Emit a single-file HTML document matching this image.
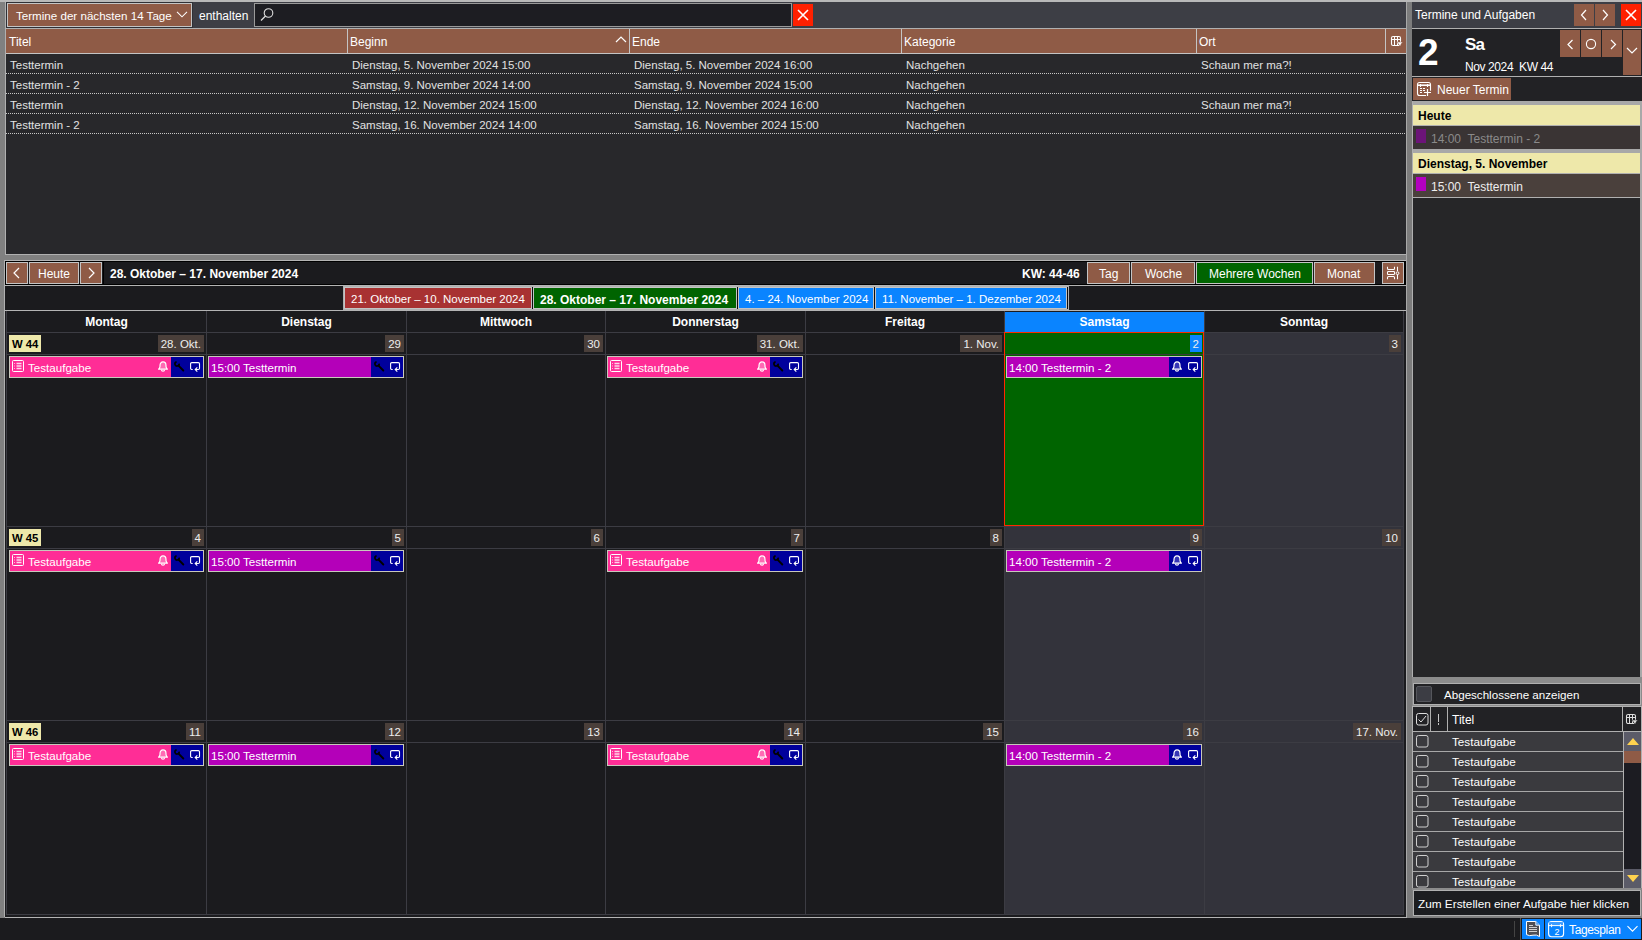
<!DOCTYPE html><html><head><meta charset="utf-8"><style>
html,body{margin:0;padding:0;width:1642px;height:940px;overflow:hidden;background:#808080;font-family:"Liberation Sans", sans-serif;font-size:12px;color:#fff;}
div{box-sizing:border-box;}
svg{position:absolute;overflow:visible}
</style></head><body>
<div style="position:absolute;left:0px;top:0px;width:1642px;height:2px;background:#b9b9b9"></div>
<div style="position:absolute;left:5px;top:2px;width:1px;height:253px;background:#b0b0b0"></div>
<div style="position:absolute;left:4px;top:260px;width:1px;height:657px;background:#b0b0b0"></div>
<div style="position:absolute;left:6px;top:2px;width:1400px;height:26px;background:#3d3e45"></div>
<div style="position:absolute;left:6px;top:2px;width:187px;height:26px;background:#2f3036"></div>
<div style="position:absolute;left:7px;top:3px;width:185px;height:24px;background:#8f5b46;border:1px solid #c4c4c4"></div>
<div style="position:absolute;left:16px;top:9px;white-space:nowrap;font-size:11.6px">Termine der nächsten 14 Tage</div>
<svg style="left:176px;top:11px" width="12" height="8"><path d="M1 0.8 L6 5.8 L11 0.8" stroke="#fff" stroke-width="1.05" fill="none"/></svg>
<div style="position:absolute;left:199px;top:9px;white-space:nowrap;">enthalten</div>
<div style="position:absolute;left:254px;top:3px;width:538px;height:24px;background:#1d1d22;border:1px solid #9a9a9a"></div>
<svg style="left:259px;top:7px" width="16" height="16"><circle cx="9.5" cy="6" r="4.3" stroke="#ddd" stroke-width="1.1" fill="none"/><path d="M6.5 9 L2 13.5" stroke="#ddd" stroke-width="1.3"/></svg>
<div style="position:absolute;left:793px;top:4px;width:20px;height:22px;background:#ff2000"></div>
<svg style="left:797px;top:9px" width="12" height="12"><path d="M1 1 L11 11 M11 1 L1 11" stroke="#fff" stroke-width="1.6"/></svg>
<div style="position:absolute;left:6px;top:28px;width:1400px;height:1px;background:#b0b0b0"></div>
<div style="position:absolute;left:6px;top:29px;width:1400px;height:24px;background:#8f5b46"></div>
<div style="position:absolute;left:6px;top:53px;width:1400px;height:1px;background:#c4c4c4"></div>
<div style="position:absolute;left:347px;top:29px;width:1px;height:24px;background:#c4c4c4"></div>
<div style="position:absolute;left:629px;top:29px;width:1px;height:24px;background:#c4c4c4"></div>
<div style="position:absolute;left:901px;top:29px;width:1px;height:24px;background:#c4c4c4"></div>
<div style="position:absolute;left:1196px;top:29px;width:1px;height:24px;background:#c4c4c4"></div>
<div style="position:absolute;left:1385px;top:29px;width:1px;height:24px;background:#c4c4c4"></div>
<div style="position:absolute;left:9px;top:35px;white-space:nowrap;">Titel</div>
<div style="position:absolute;left:350px;top:35px;white-space:nowrap;">Beginn</div>
<svg style="left:615px;top:36px" width="12" height="8"><path d="M1 6 L6 1 L11 6" stroke="#fff" stroke-width="1.2" fill="none"/></svg>
<div style="position:absolute;left:632px;top:35px;white-space:nowrap;">Ende</div>
<div style="position:absolute;left:904px;top:35px;white-space:nowrap;">Kategorie</div>
<div style="position:absolute;left:1199px;top:35px;white-space:nowrap;">Ort</div>
<svg style="left:1391px;top:36px" width="13" height="12"><rect x="0.5" y="0.5" width="9" height="9" rx="1.6" stroke="#fff" stroke-width="1.1" fill="none"/><path d="M0.5 3.5 H9.5 M3.5 0.5 V9.5 M6.5 0.5 V9.5" stroke="#fff" stroke-width="1.05"/><path d="M6 6 H11.6 L8.8 10 Z" fill="#fff" stroke="#8f5b46" stroke-width="0.5"/></svg>
<div style="position:absolute;left:6px;top:54px;width:1400px;height:200px;background:#28282b"></div>
<div style="position:absolute;left:5px;top:254px;width:1402px;height:1px;background:#b0b0b0"></div>
<div style="position:absolute;left:10px;top:59px;white-space:nowrap;color:#e2e2e2;font-size:11.5px">Testtermin</div>
<div style="position:absolute;left:352px;top:59px;white-space:nowrap;color:#e2e2e2;font-size:11.5px">Dienstag, 5. November 2024 15:00</div>
<div style="position:absolute;left:634px;top:59px;white-space:nowrap;color:#e2e2e2;font-size:11.5px">Dienstag, 5. November 2024 16:00</div>
<div style="position:absolute;left:906px;top:59px;white-space:nowrap;color:#e2e2e2;font-size:11.5px">Nachgehen</div>
<div style="position:absolute;left:1201px;top:59px;white-space:nowrap;color:#e2e2e2;font-size:11.5px">Schaun mer ma?!</div>
<div style="position:absolute;left:6px;top:73px;width:1400px;height:1px;background-image:linear-gradient(90deg,#c8c8c8 50%,transparent 50%);background-size:2px 1px"></div>
<div style="position:absolute;left:10px;top:79px;white-space:nowrap;color:#e2e2e2;font-size:11.5px">Testtermin - 2</div>
<div style="position:absolute;left:352px;top:79px;white-space:nowrap;color:#e2e2e2;font-size:11.5px">Samstag, 9. November 2024 14:00</div>
<div style="position:absolute;left:634px;top:79px;white-space:nowrap;color:#e2e2e2;font-size:11.5px">Samstag, 9. November 2024 15:00</div>
<div style="position:absolute;left:906px;top:79px;white-space:nowrap;color:#e2e2e2;font-size:11.5px">Nachgehen</div>
<div style="position:absolute;left:6px;top:93px;width:1400px;height:1px;background-image:linear-gradient(90deg,#c8c8c8 50%,transparent 50%);background-size:2px 1px"></div>
<div style="position:absolute;left:10px;top:99px;white-space:nowrap;color:#e2e2e2;font-size:11.5px">Testtermin</div>
<div style="position:absolute;left:352px;top:99px;white-space:nowrap;color:#e2e2e2;font-size:11.5px">Dienstag, 12. November 2024 15:00</div>
<div style="position:absolute;left:634px;top:99px;white-space:nowrap;color:#e2e2e2;font-size:11.5px">Dienstag, 12. November 2024 16:00</div>
<div style="position:absolute;left:906px;top:99px;white-space:nowrap;color:#e2e2e2;font-size:11.5px">Nachgehen</div>
<div style="position:absolute;left:1201px;top:99px;white-space:nowrap;color:#e2e2e2;font-size:11.5px">Schaun mer ma?!</div>
<div style="position:absolute;left:6px;top:113px;width:1400px;height:1px;background-image:linear-gradient(90deg,#c8c8c8 50%,transparent 50%);background-size:2px 1px"></div>
<div style="position:absolute;left:10px;top:119px;white-space:nowrap;color:#e2e2e2;font-size:11.5px">Testtermin - 2</div>
<div style="position:absolute;left:352px;top:119px;white-space:nowrap;color:#e2e2e2;font-size:11.5px">Samstag, 16. November 2024 14:00</div>
<div style="position:absolute;left:634px;top:119px;white-space:nowrap;color:#e2e2e2;font-size:11.5px">Samstag, 16. November 2024 15:00</div>
<div style="position:absolute;left:906px;top:119px;white-space:nowrap;color:#e2e2e2;font-size:11.5px">Nachgehen</div>
<div style="position:absolute;left:6px;top:133px;width:1400px;height:1px;background-image:linear-gradient(90deg,#c8c8c8 50%,transparent 50%);background-size:2px 1px"></div>
<div style="position:absolute;left:5px;top:255px;width:1402px;height:5px;background:#808080"></div>
<div style="position:absolute;left:5px;top:260px;width:1402px;height:1px;background:#b4b4b4"></div>
<div style="position:absolute;left:1406px;top:2px;width:1px;height:915px;background:#a8a8a8"></div>
<div style="position:absolute;left:5px;top:261px;width:1401px;height:24px;background:#000"></div>
<div style="position:absolute;left:6px;top:262px;width:97px;height:22px;background:#1b1b1e"></div>
<div style="position:absolute;left:6px;top:262px;width:22px;height:22px;background:#8f5b46;border:1px solid #c4c4c4"></div>
<div style="position:absolute;left:29px;top:262px;width:50px;height:22px;background:#8f5b46;border:1px solid #c4c4c4"></div>
<div style="position:absolute;left:80px;top:262px;width:22px;height:22px;background:#8f5b46;border:1px solid #c4c4c4"></div>
<svg style="left:12px;top:267px" width="10" height="12"><path d="M7 1 L2 6 L7 11" stroke="#fff" stroke-width="1.2" fill="none"/></svg>
<div style="position:absolute;left:38px;top:267px;white-space:nowrap;">Heute</div>
<svg style="left:87px;top:267px" width="10" height="12"><path d="M2 1 L7 6 L2 11" stroke="#fff" stroke-width="1.2" fill="none"/></svg>
<div style="position:absolute;left:104px;top:262px;width:1300px;height:22px;background:#1b1b1e"></div>
<div style="position:absolute;left:110px;top:267px;white-space:nowrap;font-weight:bold">28. Oktober – 17. November 2024</div>
<div style="position:absolute;left:1022px;top:267px;white-space:nowrap;font-weight:bold">KW: 44-46</div>
<div style="position:absolute;left:1087px;top:262px;width:43px;height:22px;background:#8f5b46;border:1px solid #c4c4c4"></div>
<div style="position:absolute;left:1099px;top:267px;white-space:nowrap;">Tag</div>
<div style="position:absolute;left:1131px;top:262px;width:64px;height:22px;background:#8f5b46;border:1px solid #c4c4c4"></div>
<div style="position:absolute;left:1145px;top:267px;white-space:nowrap;">Woche</div>
<div style="position:absolute;left:1196px;top:262px;width:117px;height:22px;background:#006400;border:1px solid #c4c4c4"></div>
<div style="position:absolute;left:1209px;top:267px;white-space:nowrap;">Mehrere Wochen</div>
<div style="position:absolute;left:1314px;top:262px;width:61px;height:22px;background:#8f5b46;border:1px solid #c4c4c4"></div>
<div style="position:absolute;left:1327px;top:267px;white-space:nowrap;">Monat</div>
<div style="position:absolute;left:1382px;top:262px;width:22px;height:22px;background:#8f5b46;border:1px solid #c4c4c4"></div>
<svg style="left:1386px;top:266px" width="14" height="14"><path d="M1.5 0.8 V2.5 Q1.5 3.5 2.5 3.5 H7.5 Q8.5 3.5 8.5 2.5 V0.8 M1.5 13.2 V11.5 Q1.5 10.5 2.5 10.5 H7.5 Q8.5 10.5 8.5 11.5 V13.2 M11.5 0.8 V5 M11.5 8.5 V13.2" stroke="#fff" stroke-width="1.05" fill="none"/><rect x="1.5" y="5.5" width="7" height="3" rx="0.8" stroke="#fff" stroke-width="1.05" fill="none"/><circle cx="11.5" cy="7.2" r="1.4" stroke="#fff" stroke-width="1" fill="none"/></svg>
<div style="position:absolute;left:5px;top:285px;width:1401px;height:1px;background:#b4b4b4"></div>
<div style="position:absolute;left:5px;top:286px;width:1401px;height:24px;background:#1b1b1e"></div>
<div style="position:absolute;left:343px;top:286px;width:726px;height:24px;background:#0d0d0f;border:1px solid #b0b0b0"></div>
<div style="position:absolute;left:344px;top:287px;width:188px;height:22px;background:#a83232;border:1px solid #c4c4c4"></div>
<div style="position:absolute;left:351px;top:293px;white-space:nowrap;font-size:11.5px">21. Oktober – 10. November 2024</div>
<div style="position:absolute;left:533px;top:287px;width:204px;height:22px;background:#006400;border:1px solid #c4c4c4"></div>
<div style="position:absolute;left:540px;top:293px;white-space:nowrap;font-size:12px;font-weight:bold">28. Oktober – 17. November 2024</div>
<div style="position:absolute;left:738px;top:287px;width:136px;height:22px;background:#0a84ff;border:1px solid #c4c4c4"></div>
<div style="position:absolute;left:745px;top:293px;white-space:nowrap;font-size:11.5px">4. – 24. November 2024</div>
<div style="position:absolute;left:875px;top:287px;width:192px;height:22px;background:#0a84ff;border:1px solid #c4c4c4"></div>
<div style="position:absolute;left:882px;top:293px;white-space:nowrap;font-size:11.5px">11. November – 1. Dezember 2024</div>
<div style="position:absolute;left:5px;top:310px;width:1401px;height:1px;background:#b4b4b4"></div>
<div style="position:absolute;left:5px;top:311px;width:1401px;height:606px;background:#1b1b1e"></div>
<div style="position:absolute;left:6px;top:311px;width:1px;height:604px;background:#3c3c43"></div>
<div style="position:absolute;left:7px;top:315px;width:199px;text-align:center;font-weight:bold;font-size:12px">Montag</div>
<div style="position:absolute;left:207px;top:315px;width:199px;text-align:center;font-weight:bold;font-size:12px">Dienstag</div>
<div style="position:absolute;left:407px;top:315px;width:198px;text-align:center;font-weight:bold;font-size:12px">Mittwoch</div>
<div style="position:absolute;left:606px;top:315px;width:199px;text-align:center;font-weight:bold;font-size:12px">Donnerstag</div>
<div style="position:absolute;left:806px;top:315px;width:198px;text-align:center;font-weight:bold;font-size:12px">Freitag</div>
<div style="position:absolute;left:1005px;top:312px;width:200px;height:20px;background:#0a84ff"></div>
<div style="position:absolute;left:1005px;top:315px;width:199px;text-align:center;font-weight:bold;font-size:12px">Samstag</div>
<div style="position:absolute;left:1205px;top:315px;width:198px;text-align:center;font-weight:bold;font-size:12px">Sonntag</div>
<div style="position:absolute;left:1004px;top:332px;width:200px;height:194px;background:#006400"></div>
<div style="position:absolute;left:1205px;top:333px;width:198px;height:193px;background:#33333b"></div>
<div style="position:absolute;left:7px;top:332px;width:1397px;height:1px;background:#3c3c43"></div>
<div style="position:absolute;left:7px;top:354px;width:1397px;height:1px;background:#3c3c43"></div>
<div style="position:absolute;right:1438px;top:335px;height:17px;padding:0 3px 0 3px;background:#4a3f3a;font-size:11.5px;line-height:18px;color:#eee">28. Okt.</div>
<div style="position:absolute;right:1238px;top:335px;height:17px;padding:0 3px 0 3px;background:#4a3f3a;font-size:11.5px;line-height:18px;color:#eee">29</div>
<div style="position:absolute;right:1039px;top:335px;height:17px;padding:0 3px 0 3px;background:#4a3f3a;font-size:11.5px;line-height:18px;color:#eee">30</div>
<div style="position:absolute;right:839px;top:335px;height:17px;padding:0 3px 0 3px;background:#4a3f3a;font-size:11.5px;line-height:18px;color:#eee">31. Okt.</div>
<div style="position:absolute;right:640px;top:335px;height:17px;padding:0 3px 0 3px;background:#4a3f3a;font-size:11.5px;line-height:18px;color:#eee">1. Nov.</div>
<div style="position:absolute;right:440px;top:335px;height:17px;padding:0 3px 0 3px;background:#0a84ff;font-size:11.5px;line-height:18px;color:#eee">2</div>
<div style="position:absolute;right:241px;top:335px;height:17px;padding:0 3px 0 3px;background:#4a3f3a;font-size:11.5px;line-height:18px;color:#eee">3</div>
<div style="position:absolute;left:9px;top:335px;width:32px;height:17px;background:#eee8aa;color:#000;font-weight:bold;font-size:11.3px;line-height:18px;padding-left:3px">W 44</div>
<div style="position:absolute;left:1005px;top:527px;width:199px;height:193px;background:#33333b"></div>
<div style="position:absolute;left:1205px;top:527px;width:198px;height:193px;background:#33333b"></div>
<div style="position:absolute;left:7px;top:526px;width:1397px;height:1px;background:#3c3c43"></div>
<div style="position:absolute;left:7px;top:548px;width:1397px;height:1px;background:#3c3c43"></div>
<div style="position:absolute;right:1438px;top:529px;height:17px;padding:0 3px 0 3px;background:#4a3f3a;font-size:11.5px;line-height:18px;color:#eee">4</div>
<div style="position:absolute;right:1238px;top:529px;height:17px;padding:0 3px 0 3px;background:#4a3f3a;font-size:11.5px;line-height:18px;color:#eee">5</div>
<div style="position:absolute;right:1039px;top:529px;height:17px;padding:0 3px 0 3px;background:#4a3f3a;font-size:11.5px;line-height:18px;color:#eee">6</div>
<div style="position:absolute;right:839px;top:529px;height:17px;padding:0 3px 0 3px;background:#4a3f3a;font-size:11.5px;line-height:18px;color:#eee">7</div>
<div style="position:absolute;right:640px;top:529px;height:17px;padding:0 3px 0 3px;background:#4a3f3a;font-size:11.5px;line-height:18px;color:#eee">8</div>
<div style="position:absolute;right:440px;top:529px;height:17px;padding:0 3px 0 3px;background:#4a3f3a;font-size:11.5px;line-height:18px;color:#eee">9</div>
<div style="position:absolute;right:241px;top:529px;height:17px;padding:0 3px 0 3px;background:#4a3f3a;font-size:11.5px;line-height:18px;color:#eee">10</div>
<div style="position:absolute;left:9px;top:529px;width:32px;height:17px;background:#eee8aa;color:#000;font-weight:bold;font-size:11.3px;line-height:18px;padding-left:3px">W 45</div>
<div style="position:absolute;left:1005px;top:721px;width:199px;height:193px;background:#33333b"></div>
<div style="position:absolute;left:1205px;top:721px;width:198px;height:193px;background:#33333b"></div>
<div style="position:absolute;left:7px;top:720px;width:1397px;height:1px;background:#3c3c43"></div>
<div style="position:absolute;left:7px;top:742px;width:1397px;height:1px;background:#3c3c43"></div>
<div style="position:absolute;right:1438px;top:723px;height:17px;padding:0 3px 0 3px;background:#4a3f3a;font-size:11.5px;line-height:18px;color:#eee">11</div>
<div style="position:absolute;right:1238px;top:723px;height:17px;padding:0 3px 0 3px;background:#4a3f3a;font-size:11.5px;line-height:18px;color:#eee">12</div>
<div style="position:absolute;right:1039px;top:723px;height:17px;padding:0 3px 0 3px;background:#4a3f3a;font-size:11.5px;line-height:18px;color:#eee">13</div>
<div style="position:absolute;right:839px;top:723px;height:17px;padding:0 3px 0 3px;background:#4a3f3a;font-size:11.5px;line-height:18px;color:#eee">14</div>
<div style="position:absolute;right:640px;top:723px;height:17px;padding:0 3px 0 3px;background:#4a3f3a;font-size:11.5px;line-height:18px;color:#eee">15</div>
<div style="position:absolute;right:440px;top:723px;height:17px;padding:0 3px 0 3px;background:#4a3f3a;font-size:11.5px;line-height:18px;color:#eee">16</div>
<div style="position:absolute;right:241px;top:723px;height:17px;padding:0 3px 0 3px;background:#4a3f3a;font-size:11.5px;line-height:18px;color:#eee">17. Nov.</div>
<div style="position:absolute;left:9px;top:723px;width:32px;height:17px;background:#eee8aa;color:#000;font-weight:bold;font-size:11.3px;line-height:18px;padding-left:3px">W 46</div>
<div style="position:absolute;left:206px;top:311px;width:1px;height:604px;background:#3c3c43"></div>
<div style="position:absolute;left:406px;top:311px;width:1px;height:604px;background:#3c3c43"></div>
<div style="position:absolute;left:605px;top:311px;width:1px;height:604px;background:#3c3c43"></div>
<div style="position:absolute;left:805px;top:311px;width:1px;height:604px;background:#3c3c43"></div>
<div style="position:absolute;left:1004px;top:311px;width:1px;height:604px;background:#3c3c43"></div>
<div style="position:absolute;left:1204px;top:311px;width:1px;height:604px;background:#3c3c43"></div>
<div style="position:absolute;left:1403px;top:311px;width:1px;height:604px;background:#3c3c43"></div>
<div style="position:absolute;left:7px;top:914px;width:1397px;height:1px;background:#3c3c43"></div>
<div style="position:absolute;left:1004px;top:332px;width:200px;height:194px;border:1px solid #ff2a00"></div>
<div style="position:absolute;left:1005px;top:354px;width:198px;height:1px;background:#3a3a3a"></div>
<div style="position:absolute;left:1404px;top:311px;width:2px;height:606px;background:#1b1b1e"></div>
<div style="position:absolute;left:5px;top:915px;width:1401px;height:2px;background:#1b1b1e"></div>
<div style="position:absolute;left:5px;top:917px;width:1402px;height:1px;background:#b4b4b4"></div>
<div style="position:absolute;left:9px;top:356px;width:195px;height:22px;background:#ff2d96;border:1px solid #c8c8bc"></div>
<div style="position:absolute;left:171px;top:357px;width:32px;height:20px;background:#00009c"></div>
<svg style="left:12px;top:360px" width="12" height="12"><rect x="0.5" y="0.5" width="11" height="11" rx="1" stroke="#fff" fill="none"/><path d="M2.5 3 V3.8 M2.5 5.6 V6.4 M2.5 8.2 V9" stroke="#fff" stroke-opacity="0.8"/><path d="M4.5 3.5 H9.5 M4.5 6 H9.5 M4.5 8.5 H9.5" stroke="#fff" stroke-width="1.3" stroke-opacity="0.8"/></svg>
<div style="position:absolute;left:28px;top:361px;white-space:nowrap;font-size:11.6px">Testaufgabe</div>
<svg style="left:158px;top:361px" width="12" height="12"><path d="M0.6 8.2 Q2 7 2 5.6 V4.4 A3 3.6 0 0 1 8 4.4 V5.6 Q8 7 9.4 8.2 Z" stroke="#fff" stroke-width="1.2" stroke-linejoin="round" fill="#ff6ab4"/><path d="M3.5 8.7 A1.5 1.5 0 0 0 6.5 8.7" stroke="#fff" stroke-width="1.2" fill="none"/></svg>
<svg style="left:174px;top:361px" width="12" height="12"><path d="M5.1 2.6 A2.1 2.1 0 1 1 2.6 0.9" stroke="#000" stroke-width="1.7" fill="none"/><path d="M4.5 4.6 L9.3 9.5" stroke="#000" stroke-width="1.9" stroke-linecap="round"/></svg>
<svg style="left:190px;top:362px" width="12" height="12"><path d="M2.7 7.5 H1.8 Q0.6 7.5 0.6 6.3 V1.8 Q0.6 0.6 1.8 0.6 H8.3 Q9.5 0.6 9.5 1.8 V6.3 Q9.5 7.5 8.3 7.5 H5.3" stroke="#fff" stroke-width="1.1" fill="none"/><path d="M7.3 5.4 L5.2 7.5 L7.3 9.6" stroke="#fff" stroke-width="1.1" fill="none"/></svg>
<div style="position:absolute;left:208px;top:356px;width:196px;height:22px;background:#b400b9;border:1px solid #c8c8bc"></div>
<div style="position:absolute;left:371px;top:357px;width:32px;height:20px;background:#00009c"></div>
<div style="position:absolute;left:211px;top:361px;white-space:nowrap;font-size:11.6px">15:00 Testtermin</div>
<svg style="left:374px;top:361px" width="12" height="12"><path d="M5.1 2.6 A2.1 2.1 0 1 1 2.6 0.9" stroke="#000" stroke-width="1.7" fill="none"/><path d="M4.5 4.6 L9.3 9.5" stroke="#000" stroke-width="1.9" stroke-linecap="round"/></svg>
<svg style="left:390px;top:362px" width="12" height="12"><path d="M2.7 7.5 H1.8 Q0.6 7.5 0.6 6.3 V1.8 Q0.6 0.6 1.8 0.6 H8.3 Q9.5 0.6 9.5 1.8 V6.3 Q9.5 7.5 8.3 7.5 H5.3" stroke="#fff" stroke-width="1.1" fill="none"/><path d="M7.3 5.4 L5.2 7.5 L7.3 9.6" stroke="#fff" stroke-width="1.1" fill="none"/></svg>
<div style="position:absolute;left:607px;top:356px;width:196px;height:22px;background:#ff2d96;border:1px solid #c8c8bc"></div>
<div style="position:absolute;left:770px;top:357px;width:32px;height:20px;background:#00009c"></div>
<svg style="left:610px;top:360px" width="12" height="12"><rect x="0.5" y="0.5" width="11" height="11" rx="1" stroke="#fff" fill="none"/><path d="M2.5 3 V3.8 M2.5 5.6 V6.4 M2.5 8.2 V9" stroke="#fff" stroke-opacity="0.8"/><path d="M4.5 3.5 H9.5 M4.5 6 H9.5 M4.5 8.5 H9.5" stroke="#fff" stroke-width="1.3" stroke-opacity="0.8"/></svg>
<div style="position:absolute;left:626px;top:361px;white-space:nowrap;font-size:11.6px">Testaufgabe</div>
<svg style="left:757px;top:361px" width="12" height="12"><path d="M0.6 8.2 Q2 7 2 5.6 V4.4 A3 3.6 0 0 1 8 4.4 V5.6 Q8 7 9.4 8.2 Z" stroke="#fff" stroke-width="1.2" stroke-linejoin="round" fill="#ff6ab4"/><path d="M3.5 8.7 A1.5 1.5 0 0 0 6.5 8.7" stroke="#fff" stroke-width="1.2" fill="none"/></svg>
<svg style="left:773px;top:361px" width="12" height="12"><path d="M5.1 2.6 A2.1 2.1 0 1 1 2.6 0.9" stroke="#000" stroke-width="1.7" fill="none"/><path d="M4.5 4.6 L9.3 9.5" stroke="#000" stroke-width="1.9" stroke-linecap="round"/></svg>
<svg style="left:789px;top:362px" width="12" height="12"><path d="M2.7 7.5 H1.8 Q0.6 7.5 0.6 6.3 V1.8 Q0.6 0.6 1.8 0.6 H8.3 Q9.5 0.6 9.5 1.8 V6.3 Q9.5 7.5 8.3 7.5 H5.3" stroke="#fff" stroke-width="1.1" fill="none"/><path d="M7.3 5.4 L5.2 7.5 L7.3 9.6" stroke="#fff" stroke-width="1.1" fill="none"/></svg>
<div style="position:absolute;left:1006px;top:356px;width:196px;height:22px;background:#b400b9;border:1px solid #c8c8bc"></div>
<div style="position:absolute;left:1169px;top:357px;width:32px;height:20px;background:#00009c"></div>
<div style="position:absolute;left:1009px;top:361px;white-space:nowrap;font-size:11.6px">14:00 Testtermin - 2</div>
<svg style="left:1172px;top:361px" width="12" height="12"><path d="M0.6 8.2 Q2 7 2 5.6 V4.4 A3 3.6 0 0 1 8 4.4 V5.6 Q8 7 9.4 8.2 Z" stroke="#fff" stroke-width="1.2" stroke-linejoin="round" fill="#3535b5"/><path d="M3.5 8.7 A1.5 1.5 0 0 0 6.5 8.7" stroke="#fff" stroke-width="1.2" fill="none"/></svg>
<svg style="left:1188px;top:362px" width="12" height="12"><path d="M2.7 7.5 H1.8 Q0.6 7.5 0.6 6.3 V1.8 Q0.6 0.6 1.8 0.6 H8.3 Q9.5 0.6 9.5 1.8 V6.3 Q9.5 7.5 8.3 7.5 H5.3" stroke="#fff" stroke-width="1.1" fill="none"/><path d="M7.3 5.4 L5.2 7.5 L7.3 9.6" stroke="#fff" stroke-width="1.1" fill="none"/></svg>
<div style="position:absolute;left:9px;top:550px;width:195px;height:22px;background:#ff2d96;border:1px solid #c8c8bc"></div>
<div style="position:absolute;left:171px;top:551px;width:32px;height:20px;background:#00009c"></div>
<svg style="left:12px;top:554px" width="12" height="12"><rect x="0.5" y="0.5" width="11" height="11" rx="1" stroke="#fff" fill="none"/><path d="M2.5 3 V3.8 M2.5 5.6 V6.4 M2.5 8.2 V9" stroke="#fff" stroke-opacity="0.8"/><path d="M4.5 3.5 H9.5 M4.5 6 H9.5 M4.5 8.5 H9.5" stroke="#fff" stroke-width="1.3" stroke-opacity="0.8"/></svg>
<div style="position:absolute;left:28px;top:555px;white-space:nowrap;font-size:11.6px">Testaufgabe</div>
<svg style="left:158px;top:555px" width="12" height="12"><path d="M0.6 8.2 Q2 7 2 5.6 V4.4 A3 3.6 0 0 1 8 4.4 V5.6 Q8 7 9.4 8.2 Z" stroke="#fff" stroke-width="1.2" stroke-linejoin="round" fill="#ff6ab4"/><path d="M3.5 8.7 A1.5 1.5 0 0 0 6.5 8.7" stroke="#fff" stroke-width="1.2" fill="none"/></svg>
<svg style="left:174px;top:555px" width="12" height="12"><path d="M5.1 2.6 A2.1 2.1 0 1 1 2.6 0.9" stroke="#000" stroke-width="1.7" fill="none"/><path d="M4.5 4.6 L9.3 9.5" stroke="#000" stroke-width="1.9" stroke-linecap="round"/></svg>
<svg style="left:190px;top:556px" width="12" height="12"><path d="M2.7 7.5 H1.8 Q0.6 7.5 0.6 6.3 V1.8 Q0.6 0.6 1.8 0.6 H8.3 Q9.5 0.6 9.5 1.8 V6.3 Q9.5 7.5 8.3 7.5 H5.3" stroke="#fff" stroke-width="1.1" fill="none"/><path d="M7.3 5.4 L5.2 7.5 L7.3 9.6" stroke="#fff" stroke-width="1.1" fill="none"/></svg>
<div style="position:absolute;left:208px;top:550px;width:196px;height:22px;background:#b400b9;border:1px solid #c8c8bc"></div>
<div style="position:absolute;left:371px;top:551px;width:32px;height:20px;background:#00009c"></div>
<div style="position:absolute;left:211px;top:555px;white-space:nowrap;font-size:11.6px">15:00 Testtermin</div>
<svg style="left:374px;top:555px" width="12" height="12"><path d="M5.1 2.6 A2.1 2.1 0 1 1 2.6 0.9" stroke="#000" stroke-width="1.7" fill="none"/><path d="M4.5 4.6 L9.3 9.5" stroke="#000" stroke-width="1.9" stroke-linecap="round"/></svg>
<svg style="left:390px;top:556px" width="12" height="12"><path d="M2.7 7.5 H1.8 Q0.6 7.5 0.6 6.3 V1.8 Q0.6 0.6 1.8 0.6 H8.3 Q9.5 0.6 9.5 1.8 V6.3 Q9.5 7.5 8.3 7.5 H5.3" stroke="#fff" stroke-width="1.1" fill="none"/><path d="M7.3 5.4 L5.2 7.5 L7.3 9.6" stroke="#fff" stroke-width="1.1" fill="none"/></svg>
<div style="position:absolute;left:607px;top:550px;width:196px;height:22px;background:#ff2d96;border:1px solid #c8c8bc"></div>
<div style="position:absolute;left:770px;top:551px;width:32px;height:20px;background:#00009c"></div>
<svg style="left:610px;top:554px" width="12" height="12"><rect x="0.5" y="0.5" width="11" height="11" rx="1" stroke="#fff" fill="none"/><path d="M2.5 3 V3.8 M2.5 5.6 V6.4 M2.5 8.2 V9" stroke="#fff" stroke-opacity="0.8"/><path d="M4.5 3.5 H9.5 M4.5 6 H9.5 M4.5 8.5 H9.5" stroke="#fff" stroke-width="1.3" stroke-opacity="0.8"/></svg>
<div style="position:absolute;left:626px;top:555px;white-space:nowrap;font-size:11.6px">Testaufgabe</div>
<svg style="left:757px;top:555px" width="12" height="12"><path d="M0.6 8.2 Q2 7 2 5.6 V4.4 A3 3.6 0 0 1 8 4.4 V5.6 Q8 7 9.4 8.2 Z" stroke="#fff" stroke-width="1.2" stroke-linejoin="round" fill="#ff6ab4"/><path d="M3.5 8.7 A1.5 1.5 0 0 0 6.5 8.7" stroke="#fff" stroke-width="1.2" fill="none"/></svg>
<svg style="left:773px;top:555px" width="12" height="12"><path d="M5.1 2.6 A2.1 2.1 0 1 1 2.6 0.9" stroke="#000" stroke-width="1.7" fill="none"/><path d="M4.5 4.6 L9.3 9.5" stroke="#000" stroke-width="1.9" stroke-linecap="round"/></svg>
<svg style="left:789px;top:556px" width="12" height="12"><path d="M2.7 7.5 H1.8 Q0.6 7.5 0.6 6.3 V1.8 Q0.6 0.6 1.8 0.6 H8.3 Q9.5 0.6 9.5 1.8 V6.3 Q9.5 7.5 8.3 7.5 H5.3" stroke="#fff" stroke-width="1.1" fill="none"/><path d="M7.3 5.4 L5.2 7.5 L7.3 9.6" stroke="#fff" stroke-width="1.1" fill="none"/></svg>
<div style="position:absolute;left:1006px;top:550px;width:196px;height:22px;background:#b400b9;border:1px solid #c8c8bc"></div>
<div style="position:absolute;left:1169px;top:551px;width:32px;height:20px;background:#00009c"></div>
<div style="position:absolute;left:1009px;top:555px;white-space:nowrap;font-size:11.6px">14:00 Testtermin - 2</div>
<svg style="left:1172px;top:555px" width="12" height="12"><path d="M0.6 8.2 Q2 7 2 5.6 V4.4 A3 3.6 0 0 1 8 4.4 V5.6 Q8 7 9.4 8.2 Z" stroke="#fff" stroke-width="1.2" stroke-linejoin="round" fill="#3535b5"/><path d="M3.5 8.7 A1.5 1.5 0 0 0 6.5 8.7" stroke="#fff" stroke-width="1.2" fill="none"/></svg>
<svg style="left:1188px;top:556px" width="12" height="12"><path d="M2.7 7.5 H1.8 Q0.6 7.5 0.6 6.3 V1.8 Q0.6 0.6 1.8 0.6 H8.3 Q9.5 0.6 9.5 1.8 V6.3 Q9.5 7.5 8.3 7.5 H5.3" stroke="#fff" stroke-width="1.1" fill="none"/><path d="M7.3 5.4 L5.2 7.5 L7.3 9.6" stroke="#fff" stroke-width="1.1" fill="none"/></svg>
<div style="position:absolute;left:9px;top:744px;width:195px;height:22px;background:#ff2d96;border:1px solid #c8c8bc"></div>
<div style="position:absolute;left:171px;top:745px;width:32px;height:20px;background:#00009c"></div>
<svg style="left:12px;top:748px" width="12" height="12"><rect x="0.5" y="0.5" width="11" height="11" rx="1" stroke="#fff" fill="none"/><path d="M2.5 3 V3.8 M2.5 5.6 V6.4 M2.5 8.2 V9" stroke="#fff" stroke-opacity="0.8"/><path d="M4.5 3.5 H9.5 M4.5 6 H9.5 M4.5 8.5 H9.5" stroke="#fff" stroke-width="1.3" stroke-opacity="0.8"/></svg>
<div style="position:absolute;left:28px;top:749px;white-space:nowrap;font-size:11.6px">Testaufgabe</div>
<svg style="left:158px;top:749px" width="12" height="12"><path d="M0.6 8.2 Q2 7 2 5.6 V4.4 A3 3.6 0 0 1 8 4.4 V5.6 Q8 7 9.4 8.2 Z" stroke="#fff" stroke-width="1.2" stroke-linejoin="round" fill="#ff6ab4"/><path d="M3.5 8.7 A1.5 1.5 0 0 0 6.5 8.7" stroke="#fff" stroke-width="1.2" fill="none"/></svg>
<svg style="left:174px;top:749px" width="12" height="12"><path d="M5.1 2.6 A2.1 2.1 0 1 1 2.6 0.9" stroke="#000" stroke-width="1.7" fill="none"/><path d="M4.5 4.6 L9.3 9.5" stroke="#000" stroke-width="1.9" stroke-linecap="round"/></svg>
<svg style="left:190px;top:750px" width="12" height="12"><path d="M2.7 7.5 H1.8 Q0.6 7.5 0.6 6.3 V1.8 Q0.6 0.6 1.8 0.6 H8.3 Q9.5 0.6 9.5 1.8 V6.3 Q9.5 7.5 8.3 7.5 H5.3" stroke="#fff" stroke-width="1.1" fill="none"/><path d="M7.3 5.4 L5.2 7.5 L7.3 9.6" stroke="#fff" stroke-width="1.1" fill="none"/></svg>
<div style="position:absolute;left:208px;top:744px;width:196px;height:22px;background:#b400b9;border:1px solid #c8c8bc"></div>
<div style="position:absolute;left:371px;top:745px;width:32px;height:20px;background:#00009c"></div>
<div style="position:absolute;left:211px;top:749px;white-space:nowrap;font-size:11.6px">15:00 Testtermin</div>
<svg style="left:374px;top:749px" width="12" height="12"><path d="M5.1 2.6 A2.1 2.1 0 1 1 2.6 0.9" stroke="#000" stroke-width="1.7" fill="none"/><path d="M4.5 4.6 L9.3 9.5" stroke="#000" stroke-width="1.9" stroke-linecap="round"/></svg>
<svg style="left:390px;top:750px" width="12" height="12"><path d="M2.7 7.5 H1.8 Q0.6 7.5 0.6 6.3 V1.8 Q0.6 0.6 1.8 0.6 H8.3 Q9.5 0.6 9.5 1.8 V6.3 Q9.5 7.5 8.3 7.5 H5.3" stroke="#fff" stroke-width="1.1" fill="none"/><path d="M7.3 5.4 L5.2 7.5 L7.3 9.6" stroke="#fff" stroke-width="1.1" fill="none"/></svg>
<div style="position:absolute;left:607px;top:744px;width:196px;height:22px;background:#ff2d96;border:1px solid #c8c8bc"></div>
<div style="position:absolute;left:770px;top:745px;width:32px;height:20px;background:#00009c"></div>
<svg style="left:610px;top:748px" width="12" height="12"><rect x="0.5" y="0.5" width="11" height="11" rx="1" stroke="#fff" fill="none"/><path d="M2.5 3 V3.8 M2.5 5.6 V6.4 M2.5 8.2 V9" stroke="#fff" stroke-opacity="0.8"/><path d="M4.5 3.5 H9.5 M4.5 6 H9.5 M4.5 8.5 H9.5" stroke="#fff" stroke-width="1.3" stroke-opacity="0.8"/></svg>
<div style="position:absolute;left:626px;top:749px;white-space:nowrap;font-size:11.6px">Testaufgabe</div>
<svg style="left:757px;top:749px" width="12" height="12"><path d="M0.6 8.2 Q2 7 2 5.6 V4.4 A3 3.6 0 0 1 8 4.4 V5.6 Q8 7 9.4 8.2 Z" stroke="#fff" stroke-width="1.2" stroke-linejoin="round" fill="#ff6ab4"/><path d="M3.5 8.7 A1.5 1.5 0 0 0 6.5 8.7" stroke="#fff" stroke-width="1.2" fill="none"/></svg>
<svg style="left:773px;top:749px" width="12" height="12"><path d="M5.1 2.6 A2.1 2.1 0 1 1 2.6 0.9" stroke="#000" stroke-width="1.7" fill="none"/><path d="M4.5 4.6 L9.3 9.5" stroke="#000" stroke-width="1.9" stroke-linecap="round"/></svg>
<svg style="left:789px;top:750px" width="12" height="12"><path d="M2.7 7.5 H1.8 Q0.6 7.5 0.6 6.3 V1.8 Q0.6 0.6 1.8 0.6 H8.3 Q9.5 0.6 9.5 1.8 V6.3 Q9.5 7.5 8.3 7.5 H5.3" stroke="#fff" stroke-width="1.1" fill="none"/><path d="M7.3 5.4 L5.2 7.5 L7.3 9.6" stroke="#fff" stroke-width="1.1" fill="none"/></svg>
<div style="position:absolute;left:1006px;top:744px;width:196px;height:22px;background:#b400b9;border:1px solid #c8c8bc"></div>
<div style="position:absolute;left:1169px;top:745px;width:32px;height:20px;background:#00009c"></div>
<div style="position:absolute;left:1009px;top:749px;white-space:nowrap;font-size:11.6px">14:00 Testtermin - 2</div>
<svg style="left:1172px;top:749px" width="12" height="12"><path d="M0.6 8.2 Q2 7 2 5.6 V4.4 A3 3.6 0 0 1 8 4.4 V5.6 Q8 7 9.4 8.2 Z" stroke="#fff" stroke-width="1.2" stroke-linejoin="round" fill="#3535b5"/><path d="M3.5 8.7 A1.5 1.5 0 0 0 6.5 8.7" stroke="#fff" stroke-width="1.2" fill="none"/></svg>
<svg style="left:1188px;top:750px" width="12" height="12"><path d="M2.7 7.5 H1.8 Q0.6 7.5 0.6 6.3 V1.8 Q0.6 0.6 1.8 0.6 H8.3 Q9.5 0.6 9.5 1.8 V6.3 Q9.5 7.5 8.3 7.5 H5.3" stroke="#fff" stroke-width="1.1" fill="none"/><path d="M7.3 5.4 L5.2 7.5 L7.3 9.6" stroke="#fff" stroke-width="1.1" fill="none"/></svg>
<div style="position:absolute;left:1407px;top:2px;width:5px;height:915px;background:#7c7c7c"></div>
<div style="position:absolute;left:1412px;top:2px;width:230px;height:26px;background:#3d3e45"></div>
<div style="position:absolute;left:1415px;top:8px;white-space:nowrap;">Termine und Aufgaben</div>
<div style="position:absolute;left:1574px;top:4px;width:20px;height:22px;background:#8f5b46"></div>
<div style="position:absolute;left:1595px;top:4px;width:20px;height:22px;background:#8f5b46"></div>
<svg style="left:1579px;top:9px" width="10" height="12"><path d="M7 1 L2.5 6 L7 11" stroke="#fff" stroke-width="1.2" fill="none"/></svg>
<svg style="left:1600px;top:9px" width="10" height="12"><path d="M3 1 L7.5 6 L3 11" stroke="#fff" stroke-width="1.2" fill="none"/></svg>
<div style="position:absolute;left:1621px;top:4px;width:20px;height:22px;background:#ff2000"></div>
<svg style="left:1625px;top:9px" width="12" height="12"><path d="M1 1 L11 11 M11 1 L1 11" stroke="#fff" stroke-width="1.6"/></svg>
<div style="position:absolute;left:1412px;top:28px;width:230px;height:1px;background:#b0b0b0"></div>
<div style="position:absolute;left:1412px;top:29px;width:230px;height:47px;background:#222225"></div>
<div style="position:absolute;left:1418px;top:31px;white-space:nowrap;font-size:37px;font-weight:bold;line-height:44px">2</div>
<div style="position:absolute;left:1465px;top:35px;white-space:nowrap;font-size:17px;font-weight:bold;letter-spacing:-0.8px">Sa</div>
<div style="position:absolute;left:1465px;top:60px;white-space:nowrap;font-size:12px;letter-spacing:-0.4px">Nov 2024&nbsp; KW 44</div>
<div style="position:absolute;left:1560px;top:30px;width:20px;height:27px;background:#8f5b46"></div>
<div style="position:absolute;left:1581px;top:30px;width:20px;height:27px;background:#8f5b46"></div>
<div style="position:absolute;left:1602px;top:30px;width:20px;height:27px;background:#8f5b46"></div>
<svg style="left:1566px;top:39px" width="10" height="12"><path d="M6.5 1 L2 5.5 L6.5 10" stroke="#fff" stroke-width="1.2" fill="none"/></svg>
<svg style="left:1585px;top:38px" width="12" height="12"><circle cx="6" cy="6" r="4.6" stroke="#fff" stroke-width="1.1" fill="none"/></svg>
<svg style="left:1608px;top:39px" width="10" height="12"><path d="M3 1 L7.5 5.5 L3 10" stroke="#fff" stroke-width="1.2" fill="none"/></svg>
<div style="position:absolute;left:1623px;top:30px;width:18px;height:45px;background:#8f5b46"></div>
<svg style="left:1626px;top:46px" width="12" height="10"><path d="M1 2 L6 7 L11 2" stroke="#fff" stroke-width="1.2" fill="none"/></svg>
<div style="position:absolute;left:1412px;top:76px;width:230px;height:1px;background:#b0b0b0"></div>
<div style="position:absolute;left:1412px;top:77px;width:230px;height:24px;background:#222225"></div>
<div style="position:absolute;left:1413px;top:78px;width:98px;height:22px;background:#8f5b46"></div>
<svg style="left:1417px;top:81px" width="16" height="16"><path d="M9 14.5 H2.5 Q0.5 14.5 0.5 12.5 V3.5 Q0.5 1.5 2.5 1.5 H11.5 Q13.5 1.5 13.5 3.5 V9.7 M3.5 3 V6 M10.5 3 V6 M3 7.5 H5 M6 7.5 H8 M3 9.5 H5 M6 9.5 H8 M3 11.5 H5" stroke="#fff" stroke-width="1.1" fill="none"/><path d="M0.5 4.2 H13.5" stroke="#fff" stroke-width="1.6"/><path d="M10.5 8 V15 M7 11.5 H14" stroke="#fff" stroke-width="1.2"/></svg>
<div style="position:absolute;left:1437px;top:83px;white-space:nowrap;">Neuer Termin</div>
<div style="position:absolute;left:1412px;top:101px;width:230px;height:4px;background:#a8a8a8"></div>
<div style="position:absolute;left:1412px;top:105px;width:230px;height:572px;background:#262628"></div>
<div style="position:absolute;left:1412px;top:101px;width:1px;height:576px;background:#b0b0b0"></div>
<div style="position:absolute;left:1640px;top:101px;width:2px;height:576px;background:#a8a8a8"></div>
<div style="position:absolute;left:1413px;top:105px;width:227px;height:20px;background:#eee8aa"></div>
<div style="position:absolute;left:1418px;top:109px;white-space:nowrap;color:#000;font-weight:bold">Heute</div>
<div style="position:absolute;left:1413px;top:125px;width:227px;height:1px;background:#b0b0b0"></div>
<div style="position:absolute;left:1413px;top:126px;width:227px;height:23px;background:#3a3434"></div>
<div style="position:absolute;left:1416px;top:129px;width:10px;height:14px;background:#6c1478"></div>
<div style="position:absolute;left:1431px;top:132px;white-space:nowrap;color:#8a8a8a">14:00&nbsp; Testtermin - 2</div>
<div style="position:absolute;left:1413px;top:149px;width:227px;height:4px;background:#a8a8a8"></div>
<div style="position:absolute;left:1413px;top:153px;width:227px;height:20px;background:#eee8aa"></div>
<div style="position:absolute;left:1418px;top:157px;white-space:nowrap;color:#000;font-weight:bold">Dienstag, 5. November</div>
<div style="position:absolute;left:1413px;top:173px;width:227px;height:1px;background:#b0b0b0"></div>
<div style="position:absolute;left:1413px;top:174px;width:227px;height:23px;background:#4a403c"></div>
<div style="position:absolute;left:1416px;top:177px;width:10px;height:14px;background:#b400c0"></div>
<div style="position:absolute;left:1431px;top:180px;white-space:nowrap;color:#eee">15:00&nbsp; Testtermin</div>
<div style="position:absolute;left:1413px;top:197px;width:227px;height:1px;background:#b0b0b0"></div>
<div style="position:absolute;left:1412px;top:677px;width:230px;height:6px;background:#8c8c8c"></div>
<div style="position:absolute;left:1412px;top:683px;width:230px;height:23px;background:#8c8c8c"></div>
<div style="position:absolute;left:1413px;top:683px;width:228px;height:22px;background:#222225;border:1px solid #b0b0b0"></div>
<div style="position:absolute;left:1416px;top:686px;width:16px;height:16px;background:#3c3d44;border:1px solid #55565c;border-radius:2px"></div>
<div style="position:absolute;left:1444px;top:688px;white-space:nowrap;font-size:11.6px">Abgeschlossene anzeigen</div>
<div style="position:absolute;left:1412px;top:706px;width:230px;height:182px;background:#262629;border:1px solid #b0b0b0"></div>
<div style="position:absolute;left:1413px;top:707px;width:228px;height:24px;background:#222225"></div>
<div style="position:absolute;left:1430px;top:707px;width:1px;height:24px;background:#b0b0b0"></div>
<div style="position:absolute;left:1447px;top:707px;width:1px;height:24px;background:#b0b0b0"></div>
<div style="position:absolute;left:1622px;top:707px;width:1px;height:24px;background:#b0b0b0"></div>
<div style="position:absolute;left:1413px;top:731px;width:228px;height:1px;background:#b0b0b0"></div>
<svg style="left:1416px;top:713px" width="13" height="13"><rect x="0.5" y="0.5" width="11.5" height="11.5" rx="2" stroke="#ddd" fill="none"/><path d="M2.5 6.5 L5 9 L10 3" stroke="#ddd" fill="none"/></svg>
<div style="position:absolute;left:1438px;top:714px;width:1px;height:8px;background:#c8c8c8"></div>
<div style="position:absolute;left:1438px;top:723px;width:1px;height:2px;background:#c8c8c8"></div>
<div style="position:absolute;left:1452px;top:713px;white-space:nowrap;">Titel</div>
<svg style="left:1626px;top:714px" width="13" height="12"><rect x="0.5" y="0.5" width="9" height="9" rx="1.6" stroke="#ddd" stroke-width="1.05" fill="none"/><path d="M0.5 3.5 H9.5 M3.5 0.5 V9.5 M6.5 0.5 V9.5" stroke="#ddd" stroke-width="1"/><path d="M6 6 H11.6 L8.8 10 Z" fill="#ddd" stroke="#222225" stroke-width="0.5"/></svg>
<div style="position:absolute;left:1413px;top:732px;width:210px;height:19px;background:#3a3a3e"></div>
<div style="position:absolute;left:1413px;top:751px;width:210px;height:1px;background:#a8a8a8"></div>
<svg style="left:1416px;top:735px" width="13" height="13"><rect x="0.5" y="0.5" width="11.5" height="11.5" rx="2" stroke="#cfcfcf" fill="none"/></svg>
<div style="position:absolute;left:1452px;top:735px;white-space:nowrap;font-size:11.7px">Testaufgabe</div>
<div style="position:absolute;left:1413px;top:752px;width:210px;height:19px;background:#3a3a3e"></div>
<div style="position:absolute;left:1413px;top:771px;width:210px;height:1px;background:#a8a8a8"></div>
<svg style="left:1416px;top:755px" width="13" height="13"><rect x="0.5" y="0.5" width="11.5" height="11.5" rx="2" stroke="#cfcfcf" fill="none"/></svg>
<div style="position:absolute;left:1452px;top:755px;white-space:nowrap;font-size:11.7px">Testaufgabe</div>
<div style="position:absolute;left:1413px;top:772px;width:210px;height:19px;background:#3a3a3e"></div>
<div style="position:absolute;left:1413px;top:791px;width:210px;height:1px;background:#a8a8a8"></div>
<svg style="left:1416px;top:775px" width="13" height="13"><rect x="0.5" y="0.5" width="11.5" height="11.5" rx="2" stroke="#cfcfcf" fill="none"/></svg>
<div style="position:absolute;left:1452px;top:775px;white-space:nowrap;font-size:11.7px">Testaufgabe</div>
<div style="position:absolute;left:1413px;top:792px;width:210px;height:19px;background:#3a3a3e"></div>
<div style="position:absolute;left:1413px;top:811px;width:210px;height:1px;background:#a8a8a8"></div>
<svg style="left:1416px;top:795px" width="13" height="13"><rect x="0.5" y="0.5" width="11.5" height="11.5" rx="2" stroke="#cfcfcf" fill="none"/></svg>
<div style="position:absolute;left:1452px;top:795px;white-space:nowrap;font-size:11.7px">Testaufgabe</div>
<div style="position:absolute;left:1413px;top:812px;width:210px;height:19px;background:#3a3a3e"></div>
<div style="position:absolute;left:1413px;top:831px;width:210px;height:1px;background:#a8a8a8"></div>
<svg style="left:1416px;top:815px" width="13" height="13"><rect x="0.5" y="0.5" width="11.5" height="11.5" rx="2" stroke="#cfcfcf" fill="none"/></svg>
<div style="position:absolute;left:1452px;top:815px;white-space:nowrap;font-size:11.7px">Testaufgabe</div>
<div style="position:absolute;left:1413px;top:832px;width:210px;height:19px;background:#3a3a3e"></div>
<div style="position:absolute;left:1413px;top:851px;width:210px;height:1px;background:#a8a8a8"></div>
<svg style="left:1416px;top:835px" width="13" height="13"><rect x="0.5" y="0.5" width="11.5" height="11.5" rx="2" stroke="#cfcfcf" fill="none"/></svg>
<div style="position:absolute;left:1452px;top:835px;white-space:nowrap;font-size:11.7px">Testaufgabe</div>
<div style="position:absolute;left:1413px;top:852px;width:210px;height:19px;background:#3a3a3e"></div>
<div style="position:absolute;left:1413px;top:871px;width:210px;height:1px;background:#a8a8a8"></div>
<svg style="left:1416px;top:855px" width="13" height="13"><rect x="0.5" y="0.5" width="11.5" height="11.5" rx="2" stroke="#cfcfcf" fill="none"/></svg>
<div style="position:absolute;left:1452px;top:855px;white-space:nowrap;font-size:11.7px">Testaufgabe</div>
<div style="position:absolute;left:1413px;top:872px;width:210px;height:16px;background:#3a3a3e"></div>
<svg style="left:1416px;top:875px" width="13" height="13"><rect x="0.5" y="0.5" width="11.5" height="11.5" rx="2" stroke="#cfcfcf" fill="none"/></svg>
<div style="position:absolute;left:1452px;top:875px;white-space:nowrap;font-size:11.7px">Testaufgabe</div>
<div style="position:absolute;left:1623px;top:732px;width:1px;height:156px;background:#b0b0b0"></div>
<div style="position:absolute;left:1624px;top:732px;width:17px;height:156px;background:#1c1c22"></div>
<div style="position:absolute;left:1624px;top:732px;width:17px;height:19px;background:#5b5b68"></div>
<div style="position:absolute;left:1624px;top:751px;width:17px;height:12px;background:#8f5b46"></div>
<div style="position:absolute;left:1624px;top:869px;width:17px;height:19px;background:#5b5b68"></div>
<svg style="left:1626px;top:737px" width="14" height="9"><path d="M1 8 L7 1 L13 8 Z" fill="#ffd24f"/></svg>
<svg style="left:1626px;top:874px" width="14" height="9"><path d="M1 1 L7 8 L13 1 Z" fill="#ffd24f"/></svg>
<div style="position:absolute;left:1412px;top:888px;width:230px;height:2px;background:#8c8c8c"></div>
<div style="position:absolute;left:1413px;top:890px;width:228px;height:26px;background:#1c1d20;border:1px solid #b0b0b0"></div>
<div style="position:absolute;left:1418px;top:897px;white-space:nowrap;font-size:11.8px">Zum Erstellen einer Aufgabe hier klicken</div>
<div style="position:absolute;left:0px;top:918px;width:1642px;height:22px;background:#1b1b1e"></div>
<div style="position:absolute;left:1514px;top:921px;width:1px;height:16px;background:#444"></div>
<div style="position:absolute;left:1520px;top:918px;width:1px;height:22px;background:#555"></div>
<div style="position:absolute;left:1522px;top:919px;width:22px;height:20px;background:#0a84ff"></div>
<div style="position:absolute;left:1545px;top:919px;width:96px;height:20px;background:#0a84ff"></div>
<svg style="left:1526px;top:921px" width="16" height="17"><path d="M0.5 0.5 H9.8 L13.5 4.2 V15.6 Q10.5 13.2 7 14.2 Q3.5 15.4 0.5 13.6 Z" fill="#4f4f55" stroke="#fff" stroke-width="1"/><path d="M9.8 0.5 V4.2 H13.5" fill="#3b8fe8" stroke="#fff" stroke-width="0.9"/><path d="M3 4.5 H7 M3 6.5 H11 M3 8.5 H11 M3 10.5 H11" stroke="#d0d0d0" stroke-width="1"/></svg>
<svg style="left:1548px;top:921px" width="17" height="17"><rect x="0.6" y="0.6" width="15" height="15.2" rx="3" stroke="#fff" stroke-width="1.1" fill="none"/><rect x="1.2" y="1.2" width="13.8" height="3" fill="#3d9cff"/><path d="M0.6 4.6 H15.6" stroke="#fff" stroke-width="1"/><path d="M3.6 3.2 V6.2 M12.4 3.2 V6.2" stroke="#fff" stroke-width="1"/><text x="9" y="14" font-size="9" fill="#fff" text-anchor="middle" font-family="Liberation Sans">2</text></svg>
<div style="position:absolute;left:1569px;top:923px;white-space:nowrap;font-size:12px;letter-spacing:-0.35px">Tagesplan</div>
<svg style="left:1626px;top:925px" width="12" height="8"><path d="M1.5 1.2 L6.5 6.2 L11.5 1.2" stroke="#fff" stroke-width="1.1" fill="none"/></svg>
</body></html>
